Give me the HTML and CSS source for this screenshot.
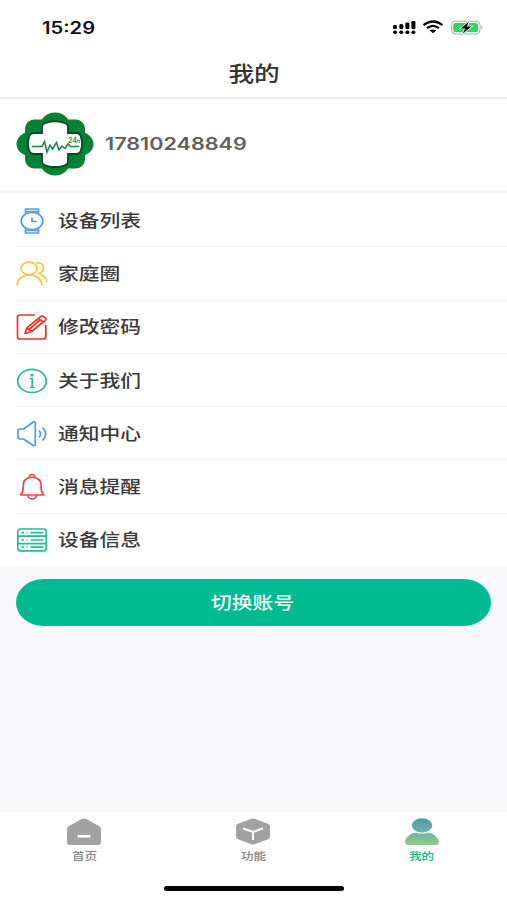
FILE: index.html
```html
<!DOCTYPE html>
<html lang="zh-CN">
<head>
    <meta charset="UTF-8">
    <meta name="viewport" content="width=device-width, initial-scale=1.0">
    <title>我的</title>
    <link rel="stylesheet" href="styles.css">
</head>
<body>
    <div class="status-bar">
        <span class="time">15:29</span>
        <svg class="status-icons" width="92" height="16" viewBox="0 0 92 16">
            <g fill="#000">
                <rect x="1" y="5" width="4" height="4" rx="1.5"/>
                <rect x="7.3" y="4" width="4" height="5" rx="1.5"/>
                <rect x="13.4" y="2.5" width="4" height="6.5" rx="1.2"/>
                <rect x="19.4" y="1" width="4" height="8" rx="1.2"/>
                <rect x="1" y="10.6" width="4" height="3.4" rx="1.7"/>
                <rect x="7.3" y="10.6" width="4" height="3.4" rx="1.7"/>
                <rect x="13.4" y="10.6" width="4" height="3.4" rx="1.7"/>
                <rect x="19.4" y="10.6" width="4" height="3.4" rx="1.7"/>
            </g>
            <g fill="none" stroke="#000" stroke-width="2.2">
                <path d="M31.500 5.200Q41 -2.200 50.500 5.200"/>
                <path d="M35 8.200Q41 3.600 47 8.200"/>
            </g>
            <path d="M37.800 10.600Q41 8.200 44.200 10.600L41 13.200Z" fill="#000"/>
            <rect x="59.500" y="1.200" width="28.500" height="12.800" rx="4" fill="#fff" stroke="#aaa"/>
            <rect x="61.200" y="2.900" width="25" height="9.400" rx="2.400" fill="#34d264"/>
            <path d="M89.300 5.500q2.200 2 0 4z" fill="#999"/>
            <path d="M77 1.500L68.800 8.400H73.200L70.700 13.800L79.400 6.600H74.800Z" fill="#000" stroke="#e8fbe9" stroke-width="1.600" paint-order="stroke"/>
        </svg>
    </div>
    <div class="nav-bar"><h1>我的</h1></div>

    <div class="profile">
        <svg class="avatar" width="78" height="64" viewBox="0 0 78 64">
            <g fill="#058136">
                <rect x="9" y="7.500" width="60" height="49" rx="9"/>
                <ellipse cx="39" cy="14" rx="15" ry="13.500"/>
                <ellipse cx="39" cy="50" rx="15" ry="13.500"/>
                <ellipse cx="16" cy="32" rx="15.500" ry="12.500"/>
                <ellipse cx="62" cy="32" rx="15.500" ry="12.500"/>
            </g>
            <path d="M31 10.500Q39 8 47 10.500Q52 11.500 52 15V21H60Q64 21 65 25Q67 32 65 38Q64 42 60 42H52V49Q52 53 47 54Q39 56 31 54Q26 53 26 49V42H18Q14 42 13 38Q11 32 13 25Q14 21 18 21H26V15Q26 11.500 31 10.500Z" fill="#fff" stroke="#044a1f" stroke-width="1.800"/>
            <path d="M16 34.500H26L28.500 29.500L31 40L34 33L36.500 37L40.500 30.500L43 38L46 34L49 36.500L52 32L54.500 34.500H63" fill="none" stroke="#178541" stroke-width="1.500"/>
            <text class="logo-text" x="52" y="30.500">24<tspan class="logo-unit">h</tspan></text>
        </svg>
        <span class="phone">17810248849</span>
    </div>

    <ul class="menu">
        <li>
            <svg class="blue" width="32" height="28" viewBox="0 0 32 28">
                <ellipse cx="16" cy="14" rx="10.800" ry="8.600"/>
                <path d="M9.500 7V2H22.500V7M10 4.500H22M9.500 21V26H22.500V21M10 23.500H22M16 10.500V14.500H20.500"/>
            </svg>
            <span>设备列表</span>
        </li>
        <li>
            <svg class="yellow" width="32" height="28" viewBox="0 0 32 28">
                <ellipse cx="13" cy="8.500" rx="8" ry="6.300"/>
                <path d="M1.200 25.500C2 11.300 25 11.300 26 25.500M20 3.200C27 1 31 10 23 13.500C28 15.500 30.500 19 30.700 22.500"/>
            </svg>
            <span>家庭圈</span>
        </li>
        <li>
            <svg class="red" width="32" height="28" viewBox="0 0 32 28">
                <path d="M19 2H4Q1.500 2 1.500 4.200V23.500Q1.500 26 4 26H27Q29.800 26 29.800 23.500V12"/>
                <path d="M9 20.500L10.800 14.800L24.800 3.500Q26.200 2.500 27.600 3.600L29.400 5.200Q30.500 6.200 29.200 7.300L15.500 18.500ZM10.800 14.800L15.500 18.500M22.500 5.300L27 9M13.500 16L24 7.200"/>
            </svg>
            <span>修改密码</span>
        </li>
        <li>
            <svg class="green" width="32" height="28" viewBox="0 0 32 28">
                <ellipse cx="16" cy="14" rx="14.300" ry="11.600"/>
                <path d="M13.800 11.500H16.200V20.500M13.800 20.500H18.600"/>
                <ellipse cx="16" cy="8.200" rx=".8" ry=".6"/>
            </svg>
            <span>关于我们</span>
        </li>
        <li>
            <svg class="blue" width="32" height="28" viewBox="0 0 32 28">
                <path d="M2 10.500Q2 9 3.500 9H7.500L17 2.300Q19.300 1.200 19.300 3.500V24Q19.300 26.500 17 25.300L7.500 19H3.500Q2 19 2 17.500ZM23 10.500Q26 14 23 17.500M26.500 7.500Q33 14 26.500 20.500"/>
            </svg>
            <span>通知中心</span>
        </li>
        <li>
            <svg class="crimson" width="32" height="28" viewBox="0 0 32 28">
                <path d="M13.300 4.500C12.700 .5 19.500 .5 18.800 4.500M4.500 22C8 18.500 7 15.500 7.300 11.500C7.600 1.800 24.700 1.800 25 11.500C25.300 15.500 24.300 18.500 27.800 22ZM12 22.500C12.500 27 20 27 20.500 22.500"/>
            </svg>
            <span>消息提醒</span>
        </li>
        <li>
            <svg class="green" width="32" height="28" viewBox="0 0 32 28">
                <rect x="1.800" y="3" width="28.500" height="21.800" rx="2.500"/>
                <path d="M2 10.200H30M2 17.600H30"/>
                <path d="M5.500 6.700H8M10.500 6.700H11.500M14.500 6.700H27M5.500 14H8M10.500 14H11.500M14.500 14H27M5.500 21.200H8M10.500 21.200H11.500M14.500 21.200H27"/>
            </svg>
            <span>设备信息</span>
        </li>
    </ul>

    <button class="switch-btn"><span>切换账号</span></button>

    <div class="tab-bar">
        <div class="tabs">
            <a class="tab">
                <svg width="34" height="28" viewBox="0 0 34 28">
                    <path d="M14.800 1.100Q17 -.1 19.200 1.100L32 8Q34 9.200 34 11V24Q34 27 31 27H3Q0 27 0 24V11Q0 9.200 2 8Z" fill="#a1a1a1"/>
                    <rect x="10.500" y="17" width="13" height="2.500" rx=".5" fill="#fff"/>
                </svg>
                <span>首页</span>
            </a>
            <a class="tab">
                <svg width="34" height="28" viewBox="0 0 34 28">
                    <path d="M14.800 1.100Q17 0 19.200 1.100L32 5.800Q34 6.800 34 8.500V18.500Q34 20.200 32 21.200L19.200 26Q17 27 14.800 26L2 21.200Q0 20.200 0 18.500V8.500Q0 6.800 2 5.800Z" fill="#a1a1a1"/>
                    <path d="M7 10.300L17 14L27 10.300M17 14V22" fill="none" stroke="#fff" stroke-width="2"/>
                </svg>
                <span>功能</span>
            </a>
            <a class="tab active">
                <svg width="34" height="28" viewBox="0 0 34 28">
                    <defs>
                        <linearGradient id="user-fill" x1="0" y1="0" x2="0" y2="27" gradientUnits="userSpaceOnUse">
                            <stop offset="0" stop-color="#4797b5"/>
                            <stop offset="1" stop-color="#92cc88"/>
                        </linearGradient>
                    </defs>
                    <g fill="url(#user-fill)">
                        <ellipse cx="17" cy="7.500" rx="10.200" ry="7.200"/>
                        <path d="M0 23.500C1.500 18 7 14.800 11 14.800Q17 16.500 23 14.800C27 14.800 32.500 18 34 23.500Q34 27 30.500 27H3.500Q0 27 0 23.500Z"/>
                    </g>
                </svg>
                <span>我的</span>
            </a>
        </div>
        <div class="home-indicator"></div>
    </div>
</body>
</html>
```

FILE: styles.css
```css
* {
    box-sizing: border-box;
}

body {
    margin: 0;
    height: 900px;
    display: flex;
    flex-direction: column;
    background-color: #f8f8fb;
    color: #3a3a3a;
    font-family: Inter, "Noto Sans CJK SC", sans-serif;
    overflow: hidden;
}

.status-bar {
    height: 54px;
    padding: 1px 23px 0 42px;
    display: flex;
    justify-content: space-between;
    align-items: center;
    background-color: #fff;
}

.time {
    font-size: 16.8px;
    font-weight: 600;
    color: #111;
    transform: scaleX(1.2);
    transform-origin: left;
}

.nav-bar {
    height: 45px;
    display: flex;
    justify-content: center;
    align-items: center;
    background-color: #fff;
    border-bottom: 2px solid #efefef;
}

.nav-bar h1 {
    margin: 0 0 4px;
    font-size: 21px;
    line-height: 30px;
    font-weight: 500;
    color: #333;
    transform: scaleX(1.22);
}

.profile {
    height: 94px;
    padding: 1px 16px 2px;
    display: flex;
    align-items: center;
    background-color: #fff;
    border-bottom: 3px solid #f7f7f8;
}

.avatar {
    margin-right: 11px;
}

.logo-text {
    font-size: 7px;
    font-weight: 600;
    fill: #178541;
}

.logo-unit {
    font-size: 5px;
}

.phone {
    font-size: 17px;
    font-weight: 600;
    color: #606060;
    transform: scaleX(1.27);
    transform-origin: left;
}

.menu {
    margin: 0;
    padding: 1px 0 0 16px;
    list-style: none;
    background-color: #fff;
}

.menu li {
    height: 53.3px;
    padding-top: 1px;
    display: flex;
    align-items: center;
    border-bottom: 1.5px solid #f5f5f6;
}

.menu li:last-child {
    height: 52.3px;
    border-bottom: none;
}

.menu svg {
    margin-right: 11px;
    fill: none;
    stroke: currentColor;
    stroke-width: 1.7;
    stroke-linejoin: round;
}

.menu span {
    margin-left: -1px;
    font-size: 17.3px;
    line-height: 26px;
    font-weight: 500;
    transform: scaleX(1.2);
    transform-origin: left;
}

.blue {
    color: #4f9be6;
}

.yellow {
    color: #f8c63c;
}

.red {
    color: #ee3028;
}

.crimson {
    color: #f04450;
}

.green {
    color: #20bf8b;
}

.switch-btn {
    height: 47px;
    margin: 13px 16px 0;
    padding: 0 1px 2px 0;
    border: none;
    border-radius: 28px / 24px;
    background-color: #00bb92;
    color: #fff;
    font-family: inherit;
    font-size: 17.3px;
    font-weight: 500;
}

.switch-btn span {
    display: inline-block;
    transform: scaleX(1.2);
}

.tab-bar {
    height: 88px;
    margin-top: auto;
    padding-top: 6px;
    background-color: #fff;
}

.tabs {
    display: flex;
    padding-right: 1px;
}

.tab {
    flex: 1;
    display: flex;
    flex-direction: column;
    align-items: center;
    color: #858585;
}

.tab span {
    margin-top: 2px;
    font-size: 10.5px;
    line-height: 17px;
    font-weight: 500;
    transform: scaleX(1.2);
}

.tab.active {
    color: #12b98b;
}

.home-indicator {
    width: 180px;
    height: 5px;
    margin: 21px auto 0;
    border-radius: 3px;
    background-color: #000;
}
```
